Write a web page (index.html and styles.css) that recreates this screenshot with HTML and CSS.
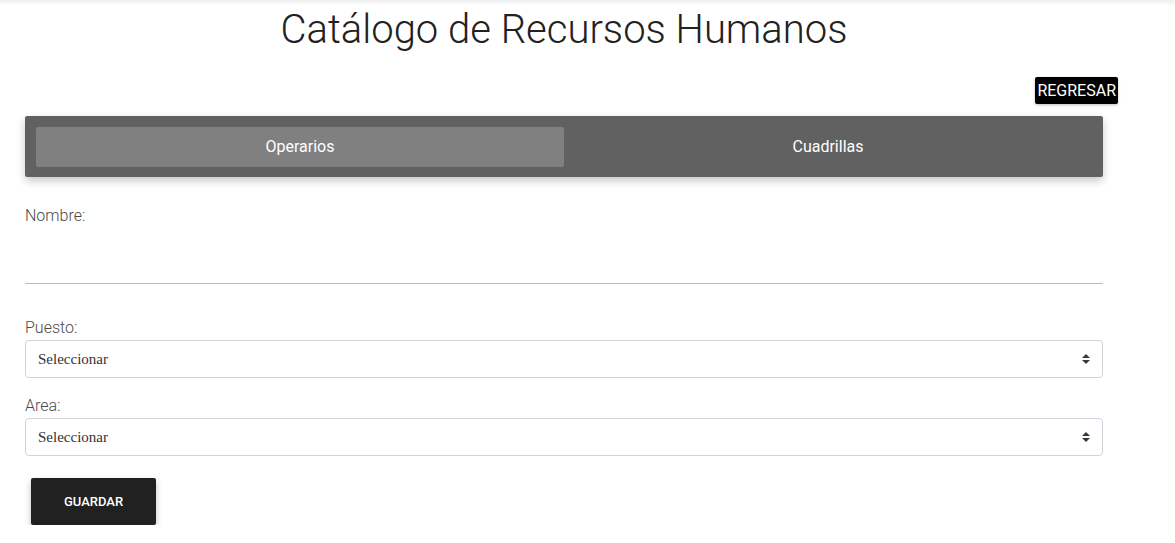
FILE: index.html
```html
<!DOCTYPE html>
<html lang="es">
<head>
<meta charset="utf-8">
<title>Catálogo de Recursos Humanos</title>
<link rel="stylesheet" href="styles.css">
</head>
<body>
<div class="topshade"></div>
<main class="container">
  <h1 class="title">Catálogo de Recursos Humanos</h1>
  <div class="back-row">
    <button class="btn-back" type="button">REGRESAR</button>
  </div>
  <nav class="tabs">
    <div class="tab active">Operarios</div>
    <div class="tab">Cuadrillas</div>
  </nav>
  <form class="form">
    <div class="field field-text">
      <label class="label">Nombre:</label>
      <input class="text-input" type="text">
    </div>
    <div class="field">
      <label class="label">Puesto:</label>
      <select class="select"><option>Seleccionar</option></select>
    </div>
    <div class="field">
      <label class="label">Area:</label>
      <select class="select"><option>Seleccionar</option></select>
    </div>
    <button class="btn-save" type="button">GUARDAR</button>
  </form>
</main>
</body>
</html>
```

FILE: styles.css
```css
html, body {
  margin: 0;
  padding: 0;
  background: #fff;
}
body {
  font-family: Roboto, "Liberation Sans", Arial, sans-serif;
  color: #212121;
}
.topshade {
  height: 6px;
  background: linear-gradient(#efefef, #fff);
}
.container {
  width: 1078px;
  margin-left: 25px;
}
.title {
  margin: 0;
  padding-top: 0;
  text-align: center;
  font-weight: 300;
  font-size: 40px;
  line-height: 48px;
  color: #212121;
}
.back-row {
  display: flex;
  justify-content: flex-end;
  margin-top: 23px;
  margin-right: -15px;
}
.btn-back {
  background: #000;
  color: #fff;
  border: none;
  border-radius: 2px;
  font-family: Roboto, "Liberation Sans", sans-serif;
  font-size: 16px;
  padding: 0 2px;
  height: 27px;
  line-height: 27px;
  box-shadow: 0 1px 3px rgba(0,0,0,.25);
  cursor: pointer;
}
.tabs {
  margin-top: 12px;
  background: #616161;
  border-radius: 2px;
  padding: 11px 11px 10px;
  display: flex;
  box-shadow: 0 4px 8px rgba(0,0,0,.22);
}
.tab {
  flex: 1;
  height: 40px;
  line-height: 40px;
  text-align: center;
  color: #fff;
  font-weight: 400;
  font-size: 16px;
  border-radius: 2px;
}
.tab.active {
  background: #808080;
}
.form {
  display: flex;
  flex-direction: column;
}
.field {
  display: flex;
  flex-direction: column;
}
.label {
  font-weight: 300;
  font-size: 16px;
  line-height: 20px;
  color: #4a4a4a;
  margin-bottom: 2px;
}
.field-text {
  margin-top: 29px;
}
.field-text .label {
  margin-bottom: 0;
}
.text-input {
  border: none;
  border-bottom: 1px solid #bdbdbd;
  height: 57px;
  padding: 0;
  margin-bottom: 34px;
  background: transparent;
  outline: none;
  font-size: 16px;
}
.select {
  -webkit-appearance: none;
  appearance: none;
  height: 38px;
  border: 1px solid #ced4da;
  border-radius: 4px;
  background: #fff url("data:image/svg+xml,%3csvg xmlns='http://www.w3.org/2000/svg' width='4' height='5' viewBox='0 0 4 5'%3e%3cpath fill='%23343a40' d='M2 0L0 2h4zm0 5L0 3h4z'/%3e%3c/svg%3e") no-repeat right 12px center / 8px 10px;
  padding: 0 12px;
  font-family: "Liberation Serif", "Times New Roman", serif;
  font-size: 15px;
  color: #333;
  margin-bottom: 18px;
}
.btn-save {
  align-self: flex-start;
  margin-left: 6px;
  margin-top: 4px;
  width: 125px;
  height: 47px;
  background: #212121;
  color: #fff;
  border: none;
  border-radius: 2px;
  font-family: Roboto, "Liberation Sans", sans-serif;
  font-weight: 500;
  font-size: 13px;
  box-shadow: 0 3px 6px rgba(0,0,0,.25);
  cursor: pointer;
}
```
